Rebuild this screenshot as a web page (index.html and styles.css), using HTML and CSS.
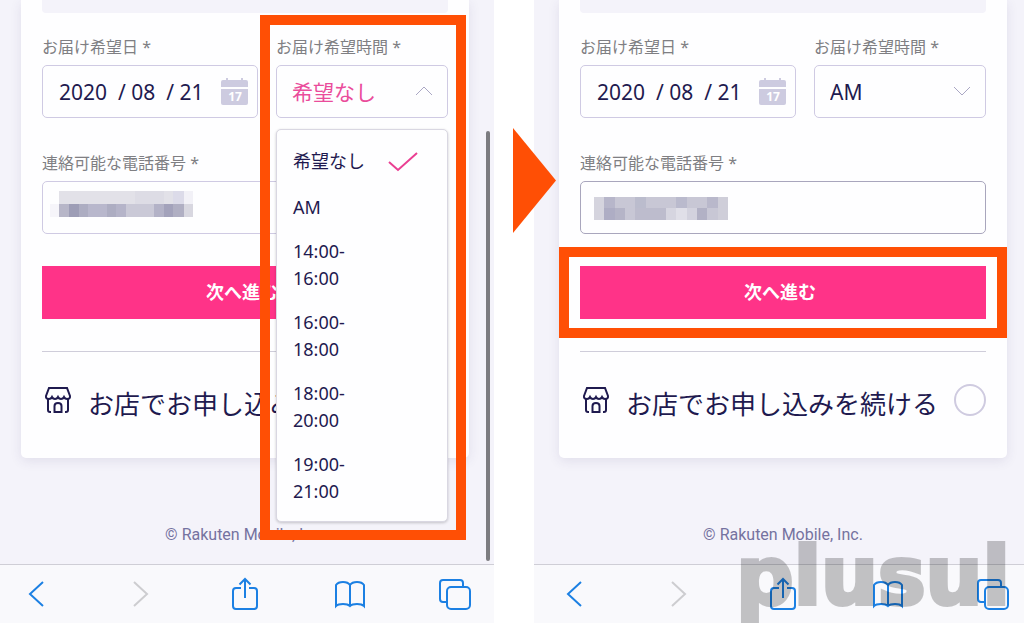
FILE: index.html
```
<!DOCTYPE html>
<html lang="ja">
<head>
    <meta charset="UTF-8">
    <meta name="viewport" content="width=device-width, initial-scale=1.0">
    <title>Rakuten Mobile</title>
    <link rel="stylesheet" href="styles.css">
</head>
<body>
    <svg width="0" height="0" class="defs">
        <symbol id="calendar" viewBox="0 0 27 27">
            <path d="M0 9V4a2 2 0 0 1 2-2h3V0h2v2h13V0h2v2h3a2 2 0 0 1 2 2v5z"/>
            <path d="M0 11h27v14a2 2 0 0 1-2 2H2a2 2 0 0 1-2-2z"/>
        </symbol>
        <symbol id="store" viewBox="0 0 28 28">
            <path d="M5 2h18l3 8q.5 3-3 3-2 0-3-2-1 2-3 2t-3-2q-1 2-3 2t-3-2q-1 2-3 2-3.500 0-3-3z"/>
            <path d="M4 13v11q0 2 2 2M24 13v11q0 2-2 2M10.500 26v-6q0-3 3.500-3t3.500 3v6zM6 26h1M21 26h1"/>
        </symbol>
        <symbol id="back" viewBox="0 0 34 34"><path d="M25 5L12 17l13 12"/></symbol>
        <symbol id="forward" viewBox="0 0 34 34"><path d="M11 5l13 12-13 12"/></symbol>
        <symbol id="share" viewBox="0 0 34 34">
            <path d="M13 11H8q-3 0-3 3v15q0 3 3 3h18q3 0 3-3V14q0-3-3-3h-5M17 21V2M11.500 7.500L17 2l5.500 5.500"/>
        </symbol>
        <symbol id="book" viewBox="0 0 34 34">
            <path d="M18 8q-2-3-7-3-5 0-7 3v21q2-2 7-2t7 2q2-2 7-2t7 2V8q-2-3-7-3-5 0-7 3zM18 8v21"/>
        </symbol>
        <symbol id="tabs" viewBox="0 0 34 34">
            <rect x="10" y="10" width="23" height="22" rx="4"/>
            <path d="M10 25H6q-3 0-3-3V6q0-3 3-3h17q3 0 3 3v4"/>
        </symbol>
    </svg>

    <div class="stage">
        <section class="phone">
            <form class="card">
                <div class="panel"></div>
                <div class="row">
                    <div class="field">
                        <label for="date1">お届け希望日 *</label>
                        <input id="date1" class="control" type="text" value="2020  / 08  / 21">
                        <svg class="cal"><use href="#calendar"/><text x="14" y="23">17</text></svg>
                    </div>
                    <div class="field">
                        <label for="time1">お届け希望時間 *</label>
                        <select id="time1" class="control pink">
                            <option>希望なし</option>
                        </select>
                        <svg class="chevron" viewBox="0 0 18 10"><path d="M1 9l8-8 8 8"/></svg>
                        <ul class="menu" role="listbox" aria-label="お届け希望時間">
                            <li role="option" aria-selected="true">希望なし
                                <svg class="check" viewBox="0 0 30 20"><path d="M1 10l9 8L29 1"/></svg>
                            </li>
                            <li role="option">AM</li>
                            <li role="option">14:00-<br>16:00</li>
                            <li role="option">16:00-<br>18:00</li>
                            <li role="option">18:00-<br>20:00</li>
                            <li role="option">19:00-<br>21:00</li>
                        </ul>
                        <div class="mark mark-time"></div>
                    </div>
                </div>
                <div class="field tel">
                    <label for="tel1">連絡可能な電話番号 *</label>
                    <input id="tel1" class="control" type="tel">
                    <svg class="mosaic" viewBox="0 0 144 26" width="144" height="26">
                        <rect x="9" width="125" height="13" fill="#e2e1e8"/>
                        <rect x="85" width="29" height="13" fill="#dddce5"/>
                        <rect x="123" width="11" height="13" fill="#dcdbe9"/>
                        <rect x="134" width="9" height="13" fill="#f2f1f7"/>
                        <rect y="13" width="9" height="13" fill="#f6f5fa"/>
                        <rect x="9" y="13" width="10" height="13" fill="#b7b6c8"/>
                        <rect x="19" y="13" width="10" height="13" fill="#9d9db6"/>
                        <rect x="29" y="13" width="9" height="13" fill="#adadc2"/>
                        <rect x="38" y="13" width="19" height="13" fill="#b8b7cc"/>
                        <rect x="57" y="13" width="9" height="13" fill="#adadc2"/>
                        <rect x="66" y="13" width="10" height="13" fill="#b5b4c9"/>
                        <rect x="76" y="13" width="28" height="13" fill="#cac9d7"/>
                        <rect x="104" y="13" width="10" height="13" fill="#b3b2c7"/>
                        <rect x="114" y="13" width="9" height="13" fill="#a3a2bb"/>
                        <rect x="123" y="13" width="11" height="13" fill="#b0afc3"/>
                        <rect x="134" y="13" width="9" height="13" fill="#d8d7e0"/>
                    </svg>
                </div>
                <div class="submit">
                    <button type="button">次へ進む</button>
                </div>
                <label class="shop">
                    <svg class="store"><use href="#store"/></svg>
                    <span>お店でお申し込みを続ける</span>
                    <input type="radio" name="shop">
                </label>
            </form>
            <p class="copy">© Rakuten Mobile, Inc.</p>
            <div class="scrollbar"></div>
            <nav class="toolbar">
                <button type="button" aria-label="戻る"><svg><use href="#back"/></svg></button>
                <button type="button" aria-label="進む" disabled><svg><use href="#forward"/></svg></button>
                <button type="button" aria-label="共有"><svg><use href="#share"/></svg></button>
                <button type="button" aria-label="ブックマーク"><svg><use href="#book"/></svg></button>
                <button type="button" aria-label="タブ"><svg><use href="#tabs"/></svg></button>
            </nav>
        </section>

        <div class="between"><div class="arrow"></div></div>

        <section class="phone">
            <form class="card">
                <div class="panel"></div>
                <div class="row">
                    <div class="field">
                        <label for="date2">お届け希望日 *</label>
                        <input id="date2" class="control" type="text" value="2020  / 08  / 21">
                        <svg class="cal"><use href="#calendar"/><text x="14" y="23">17</text></svg>
                    </div>
                    <div class="field">
                        <label for="time2">お届け希望時間 *</label>
                        <select id="time2" class="control">
                            <option>AM</option>
                        </select>
                        <svg class="chevron" viewBox="0 0 18 10"><path d="M1 1l8 8 8-8"/></svg>
                    </div>
                </div>
                <div class="field tel">
                    <label for="tel2">連絡可能な電話番号 *</label>
                    <input id="tel2" class="control active" type="tel">
                    <svg class="mosaic mosaic-b" viewBox="0 0 134 23" width="134" height="23">
                        <rect width="134" height="23" fill="#c8c7d5"/>
                        <rect width="10" height="23" fill="#d5d4de"/>
                        <rect x="10" width="11" height="11" fill="#b7b6ca"/>
                        <rect x="10" y="11" width="11" height="12" fill="#aeadc4"/>
                        <rect x="21" y="11" width="10" height="12" fill="#b5b4c7"/>
                        <rect x="41" width="11" height="11" fill="#bbbccd"/>
                        <rect x="41" y="11" width="31" height="12" fill="#bdbccd"/>
                        <rect x="72" y="11" width="10" height="12" fill="#d6d5e0"/>
                        <rect x="82" y="11" width="11" height="12" fill="#e0dfe8"/>
                        <rect x="82" width="11" height="11" fill="#babacd"/>
                        <rect x="93" y="11" width="10" height="12" fill="#d3d2de"/>
                        <rect x="103" y="11" width="10" height="12" fill="#b2b1c5"/>
                        <rect x="113" width="11" height="11" fill="#b9b8cb"/>
                        <rect x="124" width="10" height="23" fill="#cfced9"/>
                    </svg>
                </div>
                <div class="submit">
                    <button type="button">次へ進む</button>
                    <div class="mark mark-submit"></div>
                </div>
                <label class="shop">
                    <svg class="store"><use href="#store"/></svg>
                    <span>お店でお申し込みを続ける</span>
                    <input type="radio" name="shop">
                </label>
            </form>
            <p class="copy">© Rakuten Mobile, Inc.</p>
            <nav class="toolbar">
                <button type="button" aria-label="戻る"><svg><use href="#back"/></svg></button>
                <button type="button" aria-label="進む" disabled><svg><use href="#forward"/></svg></button>
                <button type="button" aria-label="共有"><svg><use href="#share"/></svg></button>
                <button type="button" aria-label="ブックマーク"><svg><use href="#book"/></svg></button>
                <button type="button" aria-label="タブ"><svg><use href="#tabs"/></svg></button>
            </nav>
            <div class="watermark">plusul</div>
        </section>
    </div>
</body>
</html>
```
FILE: styles.css
```
*{
    padding: 0;
    margin: 0;
    list-style: none;
    box-sizing: border-box;
}
body{
    overflow: hidden;
    background-color: #fff;
    color: #1f1a4f;
    font-family: "Noto Sans", "Noto Sans CJK JP", sans-serif;
}
.defs{
    position: absolute;
}
/* the phones run a little past both edges of the window */
.stage{
    display: grid;
    grid-template-columns: 1fr 40px 1fr;
    min-height: 100vh;
    margin: 0 -8px 0 -4px;
}
.phone{
    position: relative;
    display: flex;
    flex-direction: column;
    background-color: #f4f3fa;
}
.card{
    margin: 0 25px;
    padding: 0 21px 42px;
    background-color: #fefeff;
    border-radius: 0 0 5px 5px;
    box-shadow: 0 3px 12px rgba(60, 50, 110, 0.1);
}
.panel{
    height: 13px;
    margin-bottom: 22px;
    background-color: #f4f3fa;
    border-radius: 0 0 4px 4px;
}
.row{
    display: grid;
    grid-template-columns: 1fr 172px;
    gap: 18px;
    margin-bottom: 33px;
}
.field{
    position: relative;
}
.field label{
    display: block;
    margin-bottom: 6px;
    color: #7f7f83;
    font-size: 16px;
    line-height: 24px;
}
.control{
    display: block;
    width: 100%;
    height: 53px;
    padding: 0 15px;
    border: 1px solid #cfcae3;
    border-radius: 5px;
    background-color: #fefeff;
    color: #1f1a4f;
    font-family: inherit;
    font-size: 21px;
    appearance: none;
    outline: none;
}
input.control{
    padding: 0 16px;
}
.pink{
    color: #ea4c9b;
}
.active{
    border-color: #a9a6bd;
}
.cal{
    position: absolute;
    right: 10px;
    bottom: 13px;
    width: 27px;
    height: 27px;
    fill: #cdcbe0;
}
.cal text{
    fill: #fff;
    font-size: 12px;
    font-weight: 700;
    text-anchor: middle;
}
.chevron{
    position: absolute;
    right: 15px;
    bottom: 22px;
    width: 18px;
    height: 10px;
    fill: none;
    stroke: #aaa7c4;
    pointer-events: none;
}
.menu{
    position: absolute;
    z-index: 2;
    top: 94px;
    left: 0;
    width: 100%;
    padding: 9px 0 8px;
    border: 1px solid #d9d7e2;
    border-radius: 5px;
    background-color: #fefeff;
    box-shadow: 0 1px 3px rgba(0, 0, 0, 0.2);
}
.menu li{
    display: flex;
    align-items: center;
    gap: 23px;
    padding: 9px 16px 8px;
    font-size: 18px;
    line-height: 27px;
}
.menu li:first-child{
    margin-bottom: 2px;
}
.check{
    width: 30px;
    height: 20px;
    fill: none;
    stroke: #ea3f92;
    stroke-width: 2;
}
/* orange frames that point out where to tap */
.mark{
    position: absolute;
    z-index: 3;
    border: 10px solid #ff4f05;
    pointer-events: none;
}
.mark-time{
    top: -20px;
    left: -16px;
    right: -18px;
    height: 525px;
}
.mark-submit{
    inset: -19px -21px;
}
.mosaic{
    position: absolute;
    left: 8px;
    bottom: 17px;
}
.mosaic-b{
    left: 14px;
    bottom: 14px;
}
.submit{
    position: relative;
    margin: 32px 0;
}
.submit button{
    display: block;
    width: 100%;
    height: 53px;
    padding: 0 6px 3px 0;
    border: 0;
    background-color: #ff3388;
    color: #fff;
    font-family: inherit;
    font-size: 18px;
    font-weight: 700;
}
.shop{
    display: flex;
    align-items: center;
    padding-top: 32px;
    border-top: 1px solid #cfcdda;
    font-size: 26px;
    line-height: 24px;
    white-space: nowrap;
}
.shop span{
    padding-top: 8px;
}
.store{
    width: 28px;
    height: 28px;
    margin: 0 16px 0 2px;
    fill: none;
    stroke: #1f1a4f;
    stroke-width: 2;
}
.shop input{
    flex: none;
    width: 32px;
    height: 32px;
    margin-left: auto;
    border: 2px solid #cfcbe0;
    border-radius: 50%;
    appearance: none;
}
.copy{
    margin: 65px 0 17px;
    color: #7572a0;
    font-family: Roboto, sans-serif;
    font-size: 16px;
    line-height: 24px;
    text-align: center;
}
.scrollbar{
    position: absolute;
    top: 131px;
    right: 4px;
    bottom: 62px;
    width: 4px;
    border-radius: 2px;
    background-color: #7c7c80;
}
.toolbar{
    display: flex;
    justify-content: space-between;
    align-items: center;
    height: 59px;
    margin-top: auto;
    padding: 0 20px 0 19px;
    border-top: 1px solid #cfced6;
    background-color: #f9f9fc;
}
.toolbar button{
    width: 40px;
    height: 34px;
    border: 0;
    background: none;
    color: #1c80e3;
}
.toolbar button:disabled{
    color: #cdcdd0;
}
.toolbar svg{
    display: block;
    width: 34px;
    height: 34px;
    margin: auto;
    fill: none;
    stroke: currentColor;
    stroke-width: 2;
}
.between{
    position: relative;
}
.arrow{
    position: absolute;
    z-index: 3;
    top: 128px;
    left: 19px;
    width: 43px;
    height: 105px;
    background-color: #ff4f05;
    clip-path: polygon(0 0, 100% 50%, 0 100%);
}
.watermark{
    position: absolute;
    right: 22px;
    bottom: 0;
    color: #000;
    opacity: 0.22;
    font-family: "DejaVu Sans", sans-serif;
    font-size: 80px;
    font-weight: 700;
    line-height: 92px;
    -webkit-text-stroke: 4px #000;
    pointer-events: none;
}
```
